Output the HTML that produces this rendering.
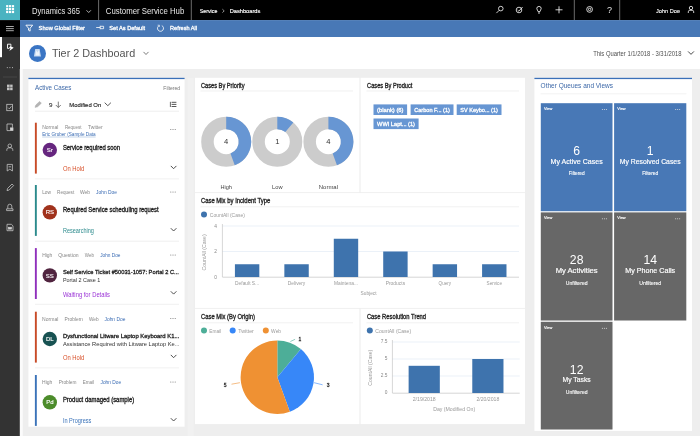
<!DOCTYPE html>
<html lang="en"><head><meta charset="utf-8"><title>Tier 2 Dashboard - Dynamics 365</title>
<style>html,body{margin:0;padding:0;background:#eeeeee;overflow:hidden}body{width:700px;height:436px;position:relative}svg{display:block;position:absolute;left:0;top:0}text{font-family:"Liberation Sans", sans-serif;white-space:pre}</style>
</head><body>
<svg width="700" height="436" viewBox="0 0 700 436">
<rect x="0" y="0" width="700" height="436" fill="#eeeeee"/>
<rect x="0" y="0" width="700" height="20.1" fill="#000"/>
<rect x="0" y="0" width="20" height="20.1" fill="#4ab3c1"/>
<rect x="20" y="20.1" width="680" height="16.9" fill="#4878b6"/>
<rect x="0" y="20.1" width="20" height="16.9" fill="#000"/>
<rect x="0" y="37" width="20" height="399" fill="#333"/>
<rect x="20" y="37" width="680" height="32" fill="#fff"/>
<rect x="187.7" y="78" width="5.8" height="358" fill="#f1f1f1"/>
<rect x="19.8" y="69" width="3.0" height="367" fill="#fbfbfb"/>
<rect x="6.1" y="5.1" width="2.2" height="2.2" fill="#fff"/>
<rect x="6.1" y="8.0" width="2.2" height="2.2" fill="#fff"/>
<rect x="6.1" y="10.899999999999999" width="2.2" height="2.2" fill="#fff"/>
<rect x="9.0" y="5.1" width="2.2" height="2.2" fill="#fff"/>
<rect x="9.0" y="8.0" width="2.2" height="2.2" fill="#fff"/>
<rect x="9.0" y="10.899999999999999" width="2.2" height="2.2" fill="#fff"/>
<rect x="11.899999999999999" y="5.1" width="2.2" height="2.2" fill="#fff"/>
<rect x="11.899999999999999" y="8.0" width="2.2" height="2.2" fill="#fff"/>
<rect x="11.899999999999999" y="10.899999999999999" width="2.2" height="2.2" fill="#fff"/>
<polyline points="86.5,10.3 88.7,12.5 90.9,10.3" fill="none" stroke="#ddd" stroke-width="0.8"/>
<line x1="98.6" y1="0" x2="98.6" y2="20" stroke="#999" stroke-width="0.7"/>
<line x1="191.3" y1="0" x2="191.3" y2="20" stroke="#999" stroke-width="0.7"/>
<polyline points="222.4,9.2 224.2,10.9 222.4,12.6" fill="none" stroke="#eee" stroke-width="0.6"/>
<g fill="none" stroke="#fff" stroke-width="0.8">
<circle cx="500.8" cy="8.6" r="2.3"/><line x1="499.2" y1="10.3" x2="496.4" y2="13.1"/>
<circle cx="519" cy="10" r="2.8"/><polyline points="517.6,10 518.8,11.2 522.6,7"/>
<path d="M536.8,8.6 a2.2,2.2 0 1 1 4.4,0 c0,1.2 -1.2,1.8 -1.2,3 h-2 c0,-1.2 -1.2,-1.8 -1.2,-3z"/><line x1="538" y1="13" x2="540" y2="13"/>
<line x1="555.5" y1="9.8" x2="562.5" y2="9.8"/><line x1="559" y1="6.3" x2="559" y2="13.3"/>
<circle cx="589.6" cy="9.4" r="2.9"/><circle cx="589.6" cy="9.4" r="1.2"/>
<circle cx="691" cy="8" r="1.7"/><path d="M688.3,13 v-1.2 a1.5,1.5 0 0 1 1.5,-1.5 h2.4 a1.5,1.5 0 0 1 1.5,1.5 v1.2"/>
</g>
<line x1="574.3" y1="0" x2="574.3" y2="20" stroke="#999" stroke-width="0.7"/>
<line x1="619.7" y1="0" x2="619.7" y2="20" stroke="#999" stroke-width="0.7"/>
<g fill="none" stroke="#fff" stroke-width="0.8">
<line x1="6" y1="26.5" x2="13.8" y2="26.5" stroke-width="0.65"/><line x1="6" y1="28.6" x2="13.8" y2="28.6" stroke-width="0.65"/><line x1="6" y1="30.7" x2="13.8" y2="30.7" stroke-width="0.65"/>
<path d="M25.9,25.2 h6.8 l-2.6,3 v2.9 l-1.6,-0.9 v-2z" stroke-width="0.9"/>
<path d="M96.2,27.5 h4 M100.2,25.8 v3.4 M100.2,26.3 h3.4 v2.4 h-3.4" />
<path d="M159.2,25.6 a3,3 0 1 0 2.6,0"/><path d="M157.6,25.2 h1.8 v1.8" stroke-width="0.6"/>
</g>
<rect x="0" y="37" width="2" height="20.2" fill="#fff"/>
<g fill="none" stroke="#fff" stroke-width="0.8">
<path d="M7.5,44.2 h3.4 v2 M7.5,44.2 v4.2 h1.8" stroke-width="0.9"/><path d="M10.4,45.9 L13.7,47.7 L9.3,50.9 L10.5,48.3 L8.9,47.9z" fill="#fff" stroke="none"/>
</g>
<circle cx="7.300000000000001" cy="67.6" r="0.55" fill="#bbb"/>
<circle cx="9.9" cy="67.6" r="0.55" fill="#bbb"/>
<circle cx="12.5" cy="67.6" r="0.55" fill="#bbb"/>
<line x1="3" y1="77" x2="17" y2="77" stroke="#555" stroke-width="0.6"/>
<g fill="none" stroke="#cccccc" stroke-width="0.75">
<rect x="7" y="84.60000000000001" width="5.6" height="5.6" fill="#c4c4c4" stroke="none"/><line x1="6.8" y1="87.4" x2="12.8" y2="87.4" stroke="#333" stroke-width="0.5"/><line x1="9.8" y1="84.4" x2="9.8" y2="90.4" stroke="#333" stroke-width="0.5"/>
<rect x="6.8" y="104.3" width="5.8" height="6.4"/><polyline points="8.2,107.7 9.4,108.89999999999999 11.4,106.3"/>
<path d="M12.4,127.8 v-3.8 h-5.4 v6.6 h3.2"/><rect x="10.4" y="127.89999999999999" width="2.6" height="2.6" fill="#d4d4d4"/>
<circle cx="9.8" cy="145.8" r="1.8"/><path d="M6.8,150.8 v-1 a2,2 0 0 1 2,-2 h2 a2,2 0 0 1 2,2 v1"/>
<path d="M7.2,164.4 h5.2 v6.6 l-2.6,-1.8 l-2.6,1.8z"/><line x1="8.6" y1="166.79999999999998" x2="11" y2="166.79999999999998"/>
<path d="M7,190.6 l0.6,-2.2 l4.4,-4.4 l1.6,1.6 l-4.4,4.4z"/>
<path d="M7.8,208.6 v-2.4 a2,2 0 0 1 4,0 v2.4 M6.6,208.79999999999998 h6.4 v1.8 h-6.4z"/>
<path d="M7,224.3 h4.4 l1.6,1.6 v4.8 h-6z"/><rect x="8.4" y="227.3" width="3" height="1.8" fill="#d4d4d4"/>
</g>
<circle cx="37.5" cy="53.4" r="8.5" fill="#3a75c4"/>
<path d="M33.9,56.6 L35.2,48.9 H39.6 L41,56.6z" fill="#c4d8f0"/>
<path d="M35.4,55.4 L36.2,50.6 L37.6,52.6 L38.8,50 L39.6,55.4z" fill="#eef4fb"/>
<polyline points="143.5,51.900000000000006 146,54.5 148.5,51.900000000000006" fill="none" stroke="#444" stroke-width="0.7"/>
<polyline points="688.1,51.449999999999996 691,54.35 693.9,51.449999999999996" fill="none" stroke="#333" stroke-width="0.9"/>
<rect x="28.4" y="77.8" width="156.2" height="348.9" fill="#fff"/>
<rect x="28.4" y="77.8" width="156.2" height="1.3" fill="#3a70b8"/>
<path d="M35,107.4 l0.8,-2.4 l3.8,-3.6 l1.8,1.8 l-3.8,3.6z" fill="#b4b4b4" stroke="#a0a0a0" stroke-width="0.4"/>
<g fill="none" stroke="#444" stroke-width="0.7"><line x1="58.3" y1="101.6" x2="58.3" y2="107.4"/><polyline points="55.8,105 58.3,107.5 60.8,105"/></g>
<polyline points="104.7,102.7 107.8,105.7 110.89999999999999,102.7" fill="none" stroke="#444" stroke-width="0.9"/>
<g stroke="#444" stroke-width="0.9"><line x1="171.6" y1="102.3" x2="176.4" y2="102.3"/><line x1="171.6" y1="104.4" x2="176.4" y2="104.4"/><line x1="171.6" y1="106.5" x2="176.4" y2="106.5"/><line x1="170.4" y1="101.8" x2="170.4" y2="107" stroke-width="0.8"/></g>
<line x1="35" y1="111.2" x2="179" y2="111.2" stroke="#e2e2e2" stroke-width="0.6"/>
<rect x="34.9" y="122.7" width="1.9" height="50.9" fill="#c84b27"/>
<line x1="42.2" y1="137.0" x2="95.6" y2="137.0" stroke="#3a6cb4" stroke-width="0.3"/>
<circle cx="170.8" cy="129.6" r="0.5" fill="#666"/>
<circle cx="173" cy="129.6" r="0.5" fill="#666"/>
<circle cx="175.2" cy="129.6" r="0.5" fill="#666"/>
<circle cx="49.8" cy="150.0" r="7.2" fill="#66267f"/>
<polyline points="170.79999999999998,165.9 173.6,168.70000000000002 176.4,165.9" fill="none" stroke="#444" stroke-width="0.95"/>
<line x1="35" y1="178.9" x2="179" y2="178.9" stroke="#e6e6e6" stroke-width="0.6"/>
<rect x="34.9" y="185.0" width="1.9" height="50.9" fill="#2b8a8c"/>
<circle cx="170.8" cy="191.9" r="0.5" fill="#666"/>
<circle cx="173" cy="191.9" r="0.5" fill="#666"/>
<circle cx="175.2" cy="191.9" r="0.5" fill="#666"/>
<circle cx="49.8" cy="212.3" r="7.2" fill="#a0321c"/>
<polyline points="170.79999999999998,228.2 173.6,231.0 176.4,228.2" fill="none" stroke="#444" stroke-width="0.95"/>
<line x1="35" y1="241.2" x2="179" y2="241.2" stroke="#e6e6e6" stroke-width="0.6"/>
<rect x="34.9" y="248.1" width="1.9" height="50.9" fill="#9030bc"/>
<circle cx="170.8" cy="255.0" r="0.5" fill="#666"/>
<circle cx="173" cy="255.0" r="0.5" fill="#666"/>
<circle cx="175.2" cy="255.0" r="0.5" fill="#666"/>
<circle cx="49.8" cy="275.4" r="7.2" fill="#50243f"/>
<polyline points="170.79999999999998,291.3 173.6,294.09999999999997 176.4,291.3" fill="none" stroke="#444" stroke-width="0.95"/>
<line x1="35" y1="304.3" x2="179" y2="304.3" stroke="#e6e6e6" stroke-width="0.6"/>
<rect x="34.9" y="311.7" width="1.9" height="50.9" fill="#c84b27"/>
<circle cx="170.8" cy="318.59999999999997" r="0.5" fill="#666"/>
<circle cx="173" cy="318.59999999999997" r="0.5" fill="#666"/>
<circle cx="175.2" cy="318.59999999999997" r="0.5" fill="#666"/>
<circle cx="49.8" cy="339.0" r="7.2" fill="#185252"/>
<polyline points="170.79999999999998,354.90000000000003 173.6,357.7 176.4,354.90000000000003" fill="none" stroke="#444" stroke-width="0.95"/>
<line x1="35" y1="367.9" x2="179" y2="367.9" stroke="#e6e6e6" stroke-width="0.6"/>
<rect x="34.9" y="375.0" width="1.9" height="50.9" fill="#3b73b9"/>
<circle cx="170.8" cy="381.9" r="0.5" fill="#666"/>
<circle cx="173" cy="381.9" r="0.5" fill="#666"/>
<circle cx="175.2" cy="381.9" r="0.5" fill="#666"/>
<circle cx="49.8" cy="402.3" r="7.2" fill="#4c8c2b"/>
<polyline points="170.79999999999998,418.20000000000005 173.6,421.0 176.4,418.20000000000005" fill="none" stroke="#444" stroke-width="0.95"/>
<rect x="195" y="77.8" width="164.39999999999998" height="114.4" fill="#fff"/>
<rect x="360.6" y="77.8" width="164.4" height="114.4" fill="#fff"/>
<rect x="195" y="193.1" width="330" height="114.8" fill="#fff"/>
<rect x="195" y="308.8" width="164.39999999999998" height="115.3" fill="#fff"/>
<rect x="360.6" y="308.8" width="164.4" height="115.3" fill="#fff"/>
<line x1="200.5" y1="91" x2="353" y2="91" stroke="#e6e6e6" stroke-width="0.6"/>
<circle cx="226.2" cy="141.7" r="18.75" fill="none" stroke="#cccccc" stroke-width="12.5"/>
<path d="M226.20,116.70 A25,25 0 0 1 234.75,165.19 L230.48,153.45 A12.5,12.5 0 0 0 226.20,129.20 Z" fill="#6796d3"/>
<circle cx="277.3" cy="141.7" r="18.75" fill="none" stroke="#cccccc" stroke-width="12.5"/>
<path d="M277.30,116.70 A25,25 0 0 1 293.37,122.55 L285.33,132.12 A12.5,12.5 0 0 0 277.30,129.20 Z" fill="#6796d3"/>
<circle cx="328.4" cy="141.7" r="18.75" fill="none" stroke="#cccccc" stroke-width="12.5"/>
<path d="M328.40,116.70 A25,25 0 0 1 336.95,165.19 L332.68,153.45 A12.5,12.5 0 0 0 328.40,129.20 Z" fill="#6796d3"/>
<line x1="366.5" y1="91" x2="519" y2="91" stroke="#e6e6e6" stroke-width="0.6"/>
<rect x="373.5" y="104.4" width="33.60000000000002" height="10.6" fill="#6796d3"/>
<rect x="410.6" y="104.4" width="42.89999999999998" height="10.6" fill="#6796d3"/>
<rect x="456.7" y="104.4" width="44.80000000000001" height="10.6" fill="#6796d3"/>
<rect x="373.5" y="118.5" width="45.10000000000002" height="10.6" fill="#6796d3"/>
<line x1="200.5" y1="206.8" x2="519" y2="206.8" stroke="#e6e6e6" stroke-width="0.6"/>
<circle cx="204" cy="214.6" r="3" fill="#3e73ad"/>
<line x1="222.4" y1="251.5" x2="519" y2="251.5" stroke="#dde8f4" stroke-width="0.6"/>
<line x1="222.4" y1="226.0" x2="519" y2="226.0" stroke="#dde8f4" stroke-width="0.6"/>
<line x1="222.4" y1="224.0" x2="222.4" y2="277.0" stroke="#bbb" stroke-width="0.6"/>
<line x1="222.4" y1="277.2" x2="519" y2="277.2" stroke="#bbb" stroke-width="0.6"/>
<rect x="234.91666666666669" y="264.25" width="24.4" height="12.75" fill="#3e73ad"/>
<rect x="284.35" y="264.25" width="24.4" height="12.75" fill="#3e73ad"/>
<rect x="333.78333333333336" y="238.75" width="24.4" height="38.25" fill="#3e73ad"/>
<rect x="383.2166666666667" y="251.5" width="24.4" height="25.5" fill="#3e73ad"/>
<rect x="432.65000000000003" y="264.25" width="24.4" height="12.75" fill="#3e73ad"/>
<rect x="482.0833333333333" y="264.25" width="24.4" height="12.75" fill="#3e73ad"/>
<line x1="200.5" y1="322.8" x2="353" y2="322.8" stroke="#e6e6e6" stroke-width="0.6"/>
<circle cx="204" cy="330.6" r="3" fill="#4dae98"/>
<circle cx="232.7" cy="330.6" r="3" fill="#3787f8"/>
<circle cx="265.8" cy="330.6" r="3" fill="#ef9133"/>
<path d="M277.3,377.2 L277.30,340.50 A36.7,36.7 0 0 1 300.89,349.09 Z" fill="#4dae98"/>
<path d="M277.3,377.2 L300.89,349.09 A36.7,36.7 0 0 1 289.85,411.69 Z" fill="#3787f8"/>
<path d="M277.3,377.2 L289.85,411.69 A36.7,36.7 0 1 1 277.30,340.50 Z" fill="#ef9133"/>
<line x1="290.4" y1="341.5" x2="295.1" y2="339.3" stroke="#4dae98" stroke-width="0.6"/>
<line x1="314.1" y1="382.7" x2="322.6" y2="384.8" stroke="#3787f8" stroke-width="0.6"/>
<line x1="231.5" y1="384.2" x2="239.9" y2="382.7" stroke="#ef9133" stroke-width="0.6"/>
<line x1="366.5" y1="322.8" x2="519" y2="322.8" stroke="#e6e6e6" stroke-width="0.6"/>
<circle cx="369.8" cy="330.6" r="3" fill="#3e73ad"/>
<line x1="392.4" y1="376.0" x2="519.7" y2="376.0" stroke="#dde8f4" stroke-width="0.6"/>
<line x1="392.4" y1="359.0" x2="519.7" y2="359.0" stroke="#dde8f4" stroke-width="0.6"/>
<line x1="392.4" y1="342.0" x2="519.7" y2="342.0" stroke="#dde8f4" stroke-width="0.6"/>
<line x1="392.4" y1="340.0" x2="392.4" y2="393.0" stroke="#bbb" stroke-width="0.6"/>
<line x1="392.4" y1="393.2" x2="519.7" y2="393.2" stroke="#bbb" stroke-width="0.6"/>
<rect x="408.625" y="365.8" width="31.2" height="27.2" fill="#3e73ad"/>
<rect x="472.275" y="359.0" width="31.2" height="34.0" fill="#3e73ad"/>
<rect x="534.4" y="77.8" width="157.6" height="353.1" fill="#fff"/>
<rect x="534.4" y="77.8" width="157.6" height="1.3" fill="#3a70b8"/>
<line x1="540.6" y1="93.8" x2="686.4" y2="93.8" stroke="#e8e8e8" stroke-width="0.6"/>
<rect x="540.8" y="103.2" width="71.7" height="108.0" fill="#4878b6"/>
<circle cx="602.4" cy="109.60000000000001" r="0.5" fill="#e4e4e4"/>
<circle cx="604.4" cy="109.60000000000001" r="0.5" fill="#e4e4e4"/>
<circle cx="606.4" cy="109.60000000000001" r="0.5" fill="#e4e4e4"/>
<rect x="614.1" y="103.2" width="72.2" height="108.0" fill="#4878b6"/>
<circle cx="675.7" cy="109.60000000000001" r="0.5" fill="#e4e4e4"/>
<circle cx="677.7" cy="109.60000000000001" r="0.5" fill="#e4e4e4"/>
<circle cx="679.7" cy="109.60000000000001" r="0.5" fill="#e4e4e4"/>
<rect x="540.8" y="212.4" width="71.7" height="108.1" fill="#676767"/>
<circle cx="602.4" cy="218.8" r="0.5" fill="#e4e4e4"/>
<circle cx="604.4" cy="218.8" r="0.5" fill="#e4e4e4"/>
<circle cx="606.4" cy="218.8" r="0.5" fill="#e4e4e4"/>
<rect x="614.1" y="212.4" width="72.2" height="108.1" fill="#676767"/>
<circle cx="675.7" cy="218.8" r="0.5" fill="#e4e4e4"/>
<circle cx="677.7" cy="218.8" r="0.5" fill="#e4e4e4"/>
<circle cx="679.7" cy="218.8" r="0.5" fill="#e4e4e4"/>
<rect x="540.8" y="321.8" width="71.7" height="107.7" fill="#676767"/>
<circle cx="602.4" cy="328.2" r="0.5" fill="#e4e4e4"/>
<circle cx="604.4" cy="328.2" r="0.5" fill="#e4e4e4"/>
<circle cx="606.4" cy="328.2" r="0.5" fill="#e4e4e4"/>
<defs><filter id="soft" x="0" y="0" width="700" height="436" filterUnits="userSpaceOnUse"><feGaussianBlur stdDeviation="0.3"/></filter></defs>
<g filter="url(#soft)">
<text x="32" y="13.9" font-size="9" fill="#e6e6e6" textLength="48" lengthAdjust="spacingAndGlyphs">Dynamics 365</text>
<text x="105.8" y="13.7" font-size="9" fill="#e6e6e6" textLength="78.5" lengthAdjust="spacingAndGlyphs">Customer Service Hub</text>
<text x="199.7" y="12.9" font-size="5.7" fill="#fff" stroke="#fff" stroke-width="0.15" textLength="17.7" lengthAdjust="spacingAndGlyphs">Service</text>
<text x="229.7" y="12.9" font-size="5.7" fill="#fff" stroke="#fff" stroke-width="0.15" textLength="30.6" lengthAdjust="spacingAndGlyphs">Dashboards</text>
<text x="609.5" y="12.9" font-size="9" fill="#e8e8e8" text-anchor="middle">?</text>
<text x="656" y="12.8" font-size="6" fill="#fff" stroke="#fff" stroke-width="0.1" textLength="24" lengthAdjust="spacingAndGlyphs">John Doe</text>
<text x="38.6" y="30.3" font-size="5.9" fill="#fff" stroke="#fff" stroke-width="0.3" textLength="46.4" lengthAdjust="spacingAndGlyphs">Show Global Filter</text>
<text x="109.3" y="30.3" font-size="5.9" fill="#fff" stroke="#fff" stroke-width="0.3" textLength="35.7" lengthAdjust="spacingAndGlyphs">Set As Default</text>
<text x="170" y="30.3" font-size="5.9" fill="#fff" stroke="#fff" stroke-width="0.3" textLength="27" lengthAdjust="spacingAndGlyphs">Refresh All</text>
<text x="52" y="56.9" font-size="11.3" fill="#555" textLength="83.2" lengthAdjust="spacingAndGlyphs">Tier 2 Dashboard</text>
<text x="593.2" y="55.8" font-size="6.3" fill="#505050" textLength="88.4" lengthAdjust="spacingAndGlyphs">This Quarter 1/1/2018 - 3/31/2018</text>
<text x="35" y="90" font-size="6.4" fill="#3c68a8" textLength="36.4" lengthAdjust="spacingAndGlyphs">Active Cases</text>
<text x="163.3" y="89.5" font-size="5.4" fill="#777" textLength="16.9" lengthAdjust="spacingAndGlyphs">Filtered</text>
<text x="49" y="106.9" font-size="6.2" fill="#333" stroke="#333" stroke-width="0.12">9</text>
<text x="69.3" y="106.9" font-size="6.2" fill="#222" stroke="#222" stroke-width="0.14" textLength="32" lengthAdjust="spacingAndGlyphs">Modified On</text>
<text x="42.2" y="129.0" font-size="4.9" fill="#858585" textLength="16.1" lengthAdjust="spacingAndGlyphs">Normal</text>
<text x="64.9" y="129.0" font-size="4.9" fill="#858585" textLength="16.6" lengthAdjust="spacingAndGlyphs">Request</text>
<text x="88" y="129.0" font-size="4.9" fill="#858585" textLength="14.7" lengthAdjust="spacingAndGlyphs">Twitter</text>
<text x="42.2" y="136.1" font-size="4.9" fill="#3a6cb4" textLength="53.4" lengthAdjust="spacingAndGlyphs">Eric Gruber (Sample Data</text>
<text x="49.8" y="152.1" font-size="6" fill="#fff" stroke="#fff" stroke-width="0.12" text-anchor="middle">Sr</text>
<text x="62.9" y="149.8" font-size="6.3" fill="#222" stroke="#222" stroke-width="0.3" textLength="57.2" lengthAdjust="spacingAndGlyphs">Service required soon</text>
<text x="62.9" y="171.1" font-size="6.3" fill="#d8512a" textLength="21.4" lengthAdjust="spacingAndGlyphs">On Hold</text>
<text x="42.2" y="194.1" font-size="4.9" fill="#858585" textLength="8.8" lengthAdjust="spacingAndGlyphs">Low</text>
<text x="57.1" y="194.1" font-size="4.9" fill="#858585" textLength="17.1" lengthAdjust="spacingAndGlyphs">Request</text>
<text x="80" y="194.1" font-size="4.9" fill="#858585" textLength="10.1" lengthAdjust="spacingAndGlyphs">Web</text>
<text x="96.1" y="194.1" font-size="4.9" fill="#3a6cb4" textLength="20.9" lengthAdjust="spacingAndGlyphs">John Doe</text>
<text x="49.8" y="214.4" font-size="6" fill="#fff" stroke="#fff" stroke-width="0.12" text-anchor="middle">RS</text>
<text x="62.9" y="212.1" font-size="6.3" fill="#222" stroke="#222" stroke-width="0.3" textLength="95.8" lengthAdjust="spacingAndGlyphs">Required Service scheduling request</text>
<text x="62.9" y="233.4" font-size="6.3" fill="#2b8a8c" textLength="31" lengthAdjust="spacingAndGlyphs">Researching</text>
<text x="42.2" y="257.2" font-size="4.9" fill="#858585" textLength="10.1" lengthAdjust="spacingAndGlyphs">High</text>
<text x="58.3" y="257.2" font-size="4.9" fill="#858585" textLength="20.2" lengthAdjust="spacingAndGlyphs">Question</text>
<text x="84.8" y="257.2" font-size="4.9" fill="#858585" textLength="9.1" lengthAdjust="spacingAndGlyphs">Web</text>
<text x="100.2" y="257.2" font-size="4.9" fill="#3a6cb4" textLength="20.2" lengthAdjust="spacingAndGlyphs">John Doe</text>
<text x="49.8" y="277.5" font-size="6" fill="#fff" stroke="#fff" stroke-width="0.12" text-anchor="middle">SS</text>
<text x="62.9" y="274.3" font-size="6.1" fill="#222" stroke="#222" stroke-width="0.3" textLength="116" lengthAdjust="spacingAndGlyphs">Self Service Ticket #50031-1057: Portal 2 C...</text>
<text x="62.9" y="282.3" font-size="6.1" fill="#333" textLength="37.3" lengthAdjust="spacingAndGlyphs">Portal 2 Case 1</text>
<text x="62.9" y="296.5" font-size="6.3" fill="#9a33d6" textLength="47.1" lengthAdjust="spacingAndGlyphs">Waiting for Details</text>
<text x="42.1" y="320.8" font-size="4.9" fill="#858585" textLength="16.2" lengthAdjust="spacingAndGlyphs">Normal</text>
<text x="64.6" y="320.8" font-size="4.9" fill="#858585" textLength="18.1" lengthAdjust="spacingAndGlyphs">Problem</text>
<text x="88.9" y="320.8" font-size="4.9" fill="#858585" textLength="9.7" lengthAdjust="spacingAndGlyphs">Web</text>
<text x="104.5" y="320.8" font-size="4.9" fill="#3a6cb4" textLength="20.9" lengthAdjust="spacingAndGlyphs">John Doe</text>
<text x="49.8" y="341.09999999999997" font-size="6" fill="#fff" stroke="#fff" stroke-width="0.12" text-anchor="middle">DL</text>
<text x="62.9" y="337.9" font-size="6.1" fill="#222" stroke="#222" stroke-width="0.3" textLength="116.5" lengthAdjust="spacingAndGlyphs">Dysfunctional Litware Laptop Keyboard K1...</text>
<text x="62.9" y="345.9" font-size="6.1" fill="#333" textLength="116.5" lengthAdjust="spacingAndGlyphs">Assistance Required with Litware Laptop Ke...</text>
<text x="62.9" y="360.09999999999997" font-size="6.3" fill="#d8512a" textLength="21.4" lengthAdjust="spacingAndGlyphs">On Hold</text>
<text x="42.1" y="384.1" font-size="4.9" fill="#858585" textLength="10.3" lengthAdjust="spacingAndGlyphs">High</text>
<text x="58.7" y="384.1" font-size="4.9" fill="#858585" textLength="17.7" lengthAdjust="spacingAndGlyphs">Problem</text>
<text x="82.7" y="384.1" font-size="4.9" fill="#858585" textLength="11.5" lengthAdjust="spacingAndGlyphs">Email</text>
<text x="100.5" y="384.1" font-size="4.9" fill="#3a6cb4" textLength="20.6" lengthAdjust="spacingAndGlyphs">John Doe</text>
<text x="49.8" y="404.4" font-size="6" fill="#fff" stroke="#fff" stroke-width="0.12" text-anchor="middle">Pd</text>
<text x="62.9" y="402.1" font-size="6.3" fill="#222" stroke="#222" stroke-width="0.3" textLength="71.3" lengthAdjust="spacingAndGlyphs">Product damaged (sample)</text>
<text x="62.9" y="423.4" font-size="6.3" fill="#3b73b9" textLength="28.5" lengthAdjust="spacingAndGlyphs">In Progress</text>
<text x="200.9" y="87.6" font-size="6.4" fill="#222" stroke="#222" stroke-width="0.3" textLength="43.6" lengthAdjust="spacingAndGlyphs">Cases By Priority</text>
<text x="226.2" y="144.3" font-size="7.6" fill="#333" text-anchor="middle">4</text>
<text x="220.45" y="189.1" font-size="6" fill="#444" textLength="11.5" lengthAdjust="spacingAndGlyphs">High</text>
<text x="277.3" y="144.3" font-size="7.6" fill="#333" text-anchor="middle">1</text>
<text x="272.05" y="189.1" font-size="6" fill="#444" textLength="10.5" lengthAdjust="spacingAndGlyphs">Low</text>
<text x="328.4" y="144.3" font-size="7.6" fill="#333" text-anchor="middle">4</text>
<text x="318.79999999999995" y="189.1" font-size="6" fill="#444" textLength="19.2" lengthAdjust="spacingAndGlyphs">Normal</text>
<text x="367.1" y="87.6" font-size="6.4" fill="#222" stroke="#222" stroke-width="0.3" textLength="45.3" lengthAdjust="spacingAndGlyphs">Cases By Product</text>
<text x="377.1" y="111.7" font-size="5.5" fill="#fff" stroke="#fff" stroke-width="0.3" textLength="26.400000000000023" lengthAdjust="spacingAndGlyphs">(blank) (6)</text>
<text x="414.20000000000005" y="111.7" font-size="5.5" fill="#fff" stroke="#fff" stroke-width="0.3" textLength="35.699999999999974" lengthAdjust="spacingAndGlyphs">Carbon F... (1)</text>
<text x="460.3" y="111.7" font-size="5.5" fill="#fff" stroke="#fff" stroke-width="0.3" textLength="37.60000000000001" lengthAdjust="spacingAndGlyphs">SV Keybo... (1)</text>
<text x="377.1" y="125.8" font-size="5.5" fill="#fff" stroke="#fff" stroke-width="0.3" textLength="37.90000000000002" lengthAdjust="spacingAndGlyphs">WWI Lapt... (1)</text>
<text x="200.9" y="203.3" font-size="6.4" fill="#222" stroke="#222" stroke-width="0.3" textLength="69.4" lengthAdjust="spacingAndGlyphs">Case Mix by Incident Type</text>
<text x="209.8" y="216.5" font-size="4.8" fill="#999" textLength="35" lengthAdjust="spacingAndGlyphs">CountAll (Case)</text>
<text x="216.8" y="278.7" font-size="4.8" fill="#888" text-anchor="end">0</text>
<text x="216.8" y="253.2" font-size="4.8" fill="#888" text-anchor="end">2</text>
<text x="216.8" y="227.7" font-size="4.8" fill="#888" text-anchor="end">4</text>
<text x="235.11666666666667" y="285.2" font-size="4.8" fill="#999" textLength="24" lengthAdjust="spacingAndGlyphs">Default S...</text>
<text x="287.8" y="285.2" font-size="4.8" fill="#999" textLength="17.5" lengthAdjust="spacingAndGlyphs">Delivery</text>
<text x="333.98333333333335" y="285.2" font-size="4.8" fill="#999" textLength="24" lengthAdjust="spacingAndGlyphs">Maintena...</text>
<text x="385.6666666666667" y="285.2" font-size="4.8" fill="#999" textLength="19.5" lengthAdjust="spacingAndGlyphs">Products</text>
<text x="438.6" y="285.2" font-size="4.8" fill="#999" textLength="12.5" lengthAdjust="spacingAndGlyphs">Query</text>
<text x="486.5333333333333" y="285.2" font-size="4.8" fill="#999" textLength="15.5" lengthAdjust="spacingAndGlyphs">Service</text>
<text x="360.6" y="295" font-size="4.8" fill="#999" textLength="16" lengthAdjust="spacingAndGlyphs">Subject</text>
<text transform="translate(206,252.4) rotate(-90)" text-anchor="middle" font-size="4.8" fill="#999" textLength="36" lengthAdjust="spacingAndGlyphs">CountAll (Case)</text>
<text x="201.1" y="319.1" font-size="6.4" fill="#222" stroke="#222" stroke-width="0.3" textLength="53.9" lengthAdjust="spacingAndGlyphs">Case Mix (By Origin)</text>
<text x="209.3" y="332.6" font-size="4.8" fill="#999" textLength="11.9" lengthAdjust="spacingAndGlyphs">Email</text>
<text x="238.3" y="332.6" font-size="4.8" fill="#999" textLength="15.6" lengthAdjust="spacingAndGlyphs">Twitter</text>
<text x="271.1" y="332.6" font-size="4.8" fill="#999" textLength="10" lengthAdjust="spacingAndGlyphs">Web</text>
<text x="299.8" y="340.8" font-size="5" fill="#333" stroke="#333" stroke-width="0.3" text-anchor="middle">1</text>
<text x="328.2" y="386.6" font-size="5" fill="#333" stroke="#333" stroke-width="0.3" text-anchor="middle">3</text>
<text x="225.2" y="386.6" font-size="5" fill="#333" stroke="#333" stroke-width="0.3" text-anchor="middle">5</text>
<text x="366.9" y="319.1" font-size="6.4" fill="#222" stroke="#222" stroke-width="0.3" textLength="59.2" lengthAdjust="spacingAndGlyphs">Case Resolution Trend</text>
<text x="375.3" y="332.6" font-size="4.8" fill="#999" textLength="35.8" lengthAdjust="spacingAndGlyphs">CountAll (Case)</text>
<text x="387.4" y="394.4" font-size="4.8" fill="#888" text-anchor="end">0</text>
<text x="387.4" y="377.4" font-size="4.8" fill="#888" text-anchor="end">2.5</text>
<text x="387.4" y="360.4" font-size="4.8" fill="#888" text-anchor="end">5</text>
<text x="387.4" y="343.4" font-size="4.8" fill="#888" text-anchor="end">7.5</text>
<text x="412.725" y="401.4" font-size="4.8" fill="#999" textLength="23" lengthAdjust="spacingAndGlyphs">2/19/2018</text>
<text x="476.375" y="401.4" font-size="4.8" fill="#999" textLength="23" lengthAdjust="spacingAndGlyphs">2/20/2018</text>
<text x="433.2" y="410.9" font-size="4.8" fill="#999" textLength="42" lengthAdjust="spacingAndGlyphs">Day (Modified On)</text>
<text transform="translate(371.7,367.7) rotate(-90)" text-anchor="middle" font-size="4.8" fill="#999" textLength="36" lengthAdjust="spacingAndGlyphs">CountAll (Case)</text>
<text x="540.6" y="88" font-size="6.3" fill="#3c68a8" textLength="72.4" lengthAdjust="spacingAndGlyphs">Other Queues and Views</text>
<text x="544.0" y="110.2" font-size="4.4" fill="#fff" stroke="#fff" stroke-width="0.15" textLength="8.3" lengthAdjust="spacingAndGlyphs">View</text>
<text x="576.65" y="155.0" font-size="12.2" fill="#fff" text-anchor="middle">6</text>
<text x="550.6" y="163.5" font-size="7.4" fill="#fff" stroke="#fff" stroke-width="0.18" textLength="52.1" lengthAdjust="spacingAndGlyphs">My Active Cases</text>
<text x="568.65" y="175.4" font-size="5" fill="#fff" stroke="#fff" stroke-width="0.1" textLength="16" lengthAdjust="spacingAndGlyphs">Filtered</text>
<text x="617.3000000000001" y="110.2" font-size="4.4" fill="#fff" stroke="#fff" stroke-width="0.15" textLength="8.3" lengthAdjust="spacingAndGlyphs">View</text>
<text x="650.2" y="155.0" font-size="12.2" fill="#fff" text-anchor="middle">1</text>
<text x="619.85" y="163.5" font-size="7.4" fill="#fff" stroke="#fff" stroke-width="0.18" textLength="60.7" lengthAdjust="spacingAndGlyphs">My Resolved Cases</text>
<text x="642.2" y="175.4" font-size="5" fill="#fff" stroke="#fff" stroke-width="0.1" textLength="16" lengthAdjust="spacingAndGlyphs">Filtered</text>
<text x="544.0" y="219.4" font-size="4.4" fill="#fff" stroke="#fff" stroke-width="0.15" textLength="8.3" lengthAdjust="spacingAndGlyphs">View</text>
<text x="576.65" y="264.2" font-size="12.2" fill="#fff" text-anchor="middle">28</text>
<text x="555.65" y="272.7" font-size="7.4" fill="#fff" stroke="#fff" stroke-width="0.18" textLength="42" lengthAdjust="spacingAndGlyphs">My Activities</text>
<text x="565.75" y="284.6" font-size="5" fill="#fff" stroke="#fff" stroke-width="0.1" textLength="21.8" lengthAdjust="spacingAndGlyphs">Unfiltered</text>
<text x="617.3000000000001" y="219.4" font-size="4.4" fill="#fff" stroke="#fff" stroke-width="0.15" textLength="8.3" lengthAdjust="spacingAndGlyphs">View</text>
<text x="650.2" y="264.2" font-size="12.2" fill="#fff" text-anchor="middle">14</text>
<text x="625.2" y="272.7" font-size="7.4" fill="#fff" stroke="#fff" stroke-width="0.18" textLength="50" lengthAdjust="spacingAndGlyphs">My Phone Calls</text>
<text x="639.3000000000001" y="284.6" font-size="5" fill="#fff" stroke="#fff" stroke-width="0.1" textLength="21.8" lengthAdjust="spacingAndGlyphs">Unfiltered</text>
<text x="544.0" y="328.8" font-size="4.4" fill="#fff" stroke="#fff" stroke-width="0.15" textLength="8.3" lengthAdjust="spacingAndGlyphs">View</text>
<text x="576.65" y="373.6" font-size="12.2" fill="#fff" text-anchor="middle">12</text>
<text x="562.55" y="382.1" font-size="7.4" fill="#fff" stroke="#fff" stroke-width="0.18" textLength="28.2" lengthAdjust="spacingAndGlyphs">My Tasks</text>
<text x="565.75" y="394.0" font-size="5" fill="#fff" stroke="#fff" stroke-width="0.1" textLength="21.8" lengthAdjust="spacingAndGlyphs">Unfiltered</text>
</g>
</svg>
</body></html>
